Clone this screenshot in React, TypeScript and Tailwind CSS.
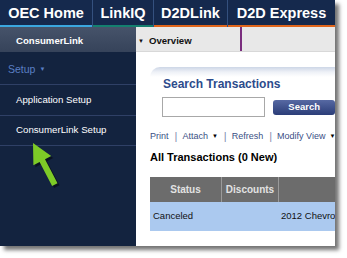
import React from "react";

const font = { fontFamily: '"Liberation Sans", Arial, sans-serif' };

function Tab({ label, w, color, sep = true }: { label: string; w: string; color: string; sep?: boolean }) {
  return (
    <div className={`flex flex-col ${w} ${sep ? "border-r border-[#34507e]" : ""}`}>
      <div className="flex-1 flex items-center justify-center text-white font-bold text-[14.5px] leading-none pt-[1px]">
        {label}
      </div>
      <div className={`h-[2px] ${color}`} />
    </div>
  );
}

function Sep() {
  return <span className="ml-[6px] mr-[5px] text-[#7f8db0] text-[11px] leading-[10px]">|</span>;
}

export default function App() {
  return (
    <div className="w-[347px] h-[258px] bg-white relative overflow-hidden" style={font}>
      <div className="w-[335px] h-[246px] flex flex-col bg-white shadow-[4px_4px_4px_rgba(0,0,0,0.55)] overflow-hidden">
        {/* top nav */}
        <div className="h-[27px] flex bg-[#15294d] shrink-0">
          <Tab label="OEC Home" w="w-[93px]" color="bg-[#3ba7df]" />
          <Tab label="LinkIQ" w="w-[61px]" color="bg-[#14806f]" />
          <Tab label="D2DLink" w="w-[74px]" color="bg-[#e0651b]" />
          <Tab label="D2D Express" w="flex-1" color="bg-[#e0651b]" sep={false} />
        </div>
        {/* body */}
        <div className="flex flex-1 min-h-0">
          {/* sidebar */}
          <div className="w-[136px] shrink-0 flex flex-col bg-[#13233f]">
            <div className="h-[25px] flex items-center pl-[16px] pt-[3px] bg-gradient-to-b from-[#46536a] to-[#36435a] text-white font-bold text-[9.6px]">
              ConsumerLink
            </div>
            <div className="h-[33px] flex items-center pl-[8px] pt-[3px] text-[#5a7fc4] text-[10.5px] border-b border-[#2f4066]">
              Setup
              <span className="ml-[4px] text-[6px]">▼</span>
            </div>
            <div className="h-[31px] flex items-center pl-[16px] text-white text-[9.7px] border-b border-[#2f4066]">
              Application Setup
            </div>
            <div className="h-[30px] flex items-center pl-[16px] text-white text-[9.7px] border-b border-[#2f4066]">
              ConsumerLink Setup
            </div>
          </div>
          {/* main */}
          <div className="flex-1 flex flex-col min-w-0">
            <div className="h-[25px] flex bg-[#e8e8e8] border-b border-[#d8d8d8] shrink-0">
              <div className="w-[106px] flex items-center pl-[2px] pt-[4px] border-r-2 border-[#7a2d7e] text-[9.6px] font-bold text-[#111]">
                <span className="text-[6px] mr-[5px]">▼</span>
                <span>Overview</span>
              </div>
            </div>
            <div className="flex-1 pl-[14px] pt-[15px] flex flex-col">
              {/* search panel */}
              <div className="rounded-tl-[12px] bg-gradient-to-b from-[#cdd6e6] via-[#eef1f7] to-white h-[10px]" />
              <div className="pl-[13px] h-[14px] leading-[14px] text-[#2c4b8c] font-bold text-[12px]">
                Search Transactions
              </div>
              <div className="flex items-center mt-[6px] pl-[12px]">
                <div className="w-[104px] h-[20px] border border-[#a8a8a8] bg-white" />
                <div className="ml-[8px] w-[62px] h-[15px] rounded-[3px] bg-gradient-to-b from-[#5769a3] to-[#2b3d78] text-white font-bold text-[9.5px] flex items-center justify-center">
                  Search
                </div>
              </div>
              <div className="flex items-center h-[10px] mt-[14px] text-[9px] text-[#3a4f85] leading-[10px] whitespace-nowrap">
                <span>Print</span>
                <Sep />
                <span>Attach</span>
                <span className="ml-[4px] text-[6px] text-black">▼</span>
                <Sep />
                <span>Refresh</span>
                <Sep />
                <span>Modify View</span>
                <span className="ml-[4px] text-[6px] text-black">▼</span>
              </div>
              <div className="mt-[10px] h-[12px] leading-[12px] font-bold text-[11px] text-black">All Transactions (0 New)</div>
              <div className="mt-[14px] flex h-[25px] bg-[#6c6c6c] text-[#e2e2e2] font-bold text-[10px]">
                <div className="w-[72px] flex items-center justify-center border-r border-[#9a9a9a]">Status</div>
                <div className="w-[57px] flex items-center justify-center border-r border-[#9a9a9a]">Discounts</div>
                <div className="flex-1" />
              </div>
              <div className="flex h-[29px] bg-[#abc9ef] text-[9.5px] text-[#111] items-center">
                <div className="w-[72px] pl-[3px]">Canceled</div>
                <div className="w-[57px]" />
                <div className="flex-1 pl-[2px] whitespace-nowrap overflow-hidden">2012 Chevrolet</div>
              </div>
            </div>
          </div>
        </div>
      </div>
      {/* green arrow */}
      <svg className="absolute left-0 top-0" width="347" height="258" viewBox="0 0 347 258">
        <polygon
          points="33,143 51.2,156.1 45,159.3 57.5,183.2 52.1,186 39.6,162.1 33.4,165.3"
          fill="rgba(0,0,0,0.45)"
          transform="translate(2,2)"
        />
        <polygon
          points="33,143 51.2,156.1 45,159.3 57.5,183.2 52.1,186 39.6,162.1 33.4,165.3"
          fill="#7dcb27"
        />
      </svg>
    </div>
  );
}
